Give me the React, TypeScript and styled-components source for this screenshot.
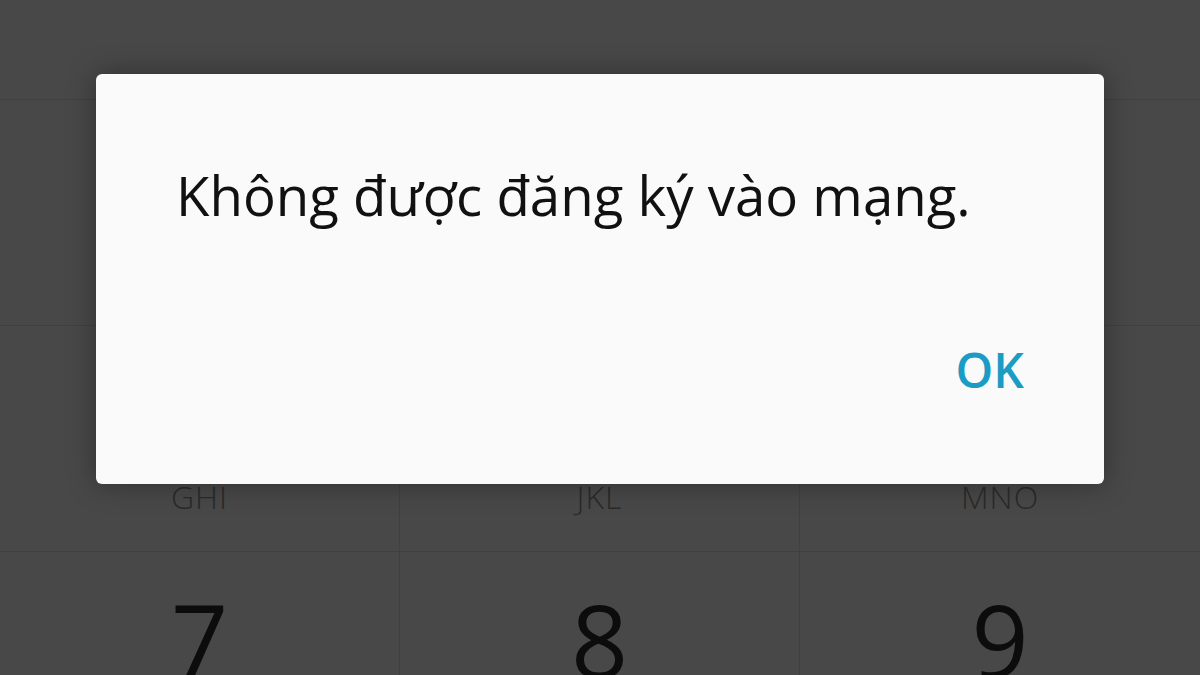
import styled, { createGlobalStyle } from "styled-components";

const GlobalStyle = createGlobalStyle`
  html, body {
    margin: 0;
    padding: 0;
    width: 1200px;
    height: 675px;
    overflow: hidden;
    background: #484848;
    font-family: "Open Sans", "Noto Sans", sans-serif;
  }
`;

export default function App() {
  const keys = [
    { id: 1, digit: "1", letters: "" },
    { id: 2, digit: "2", letters: "ABC" },
    { id: 3, digit: "3", letters: "DEF" },
    { id: 4, digit: "4", letters: "GHI" },
    { id: 5, digit: "5", letters: "JKL" },
    { id: 6, digit: "6", letters: "MNO" },
    { id: 7, digit: "7", letters: "PQRS" },
    { id: 8, digit: "8", letters: "TUV" },
    { id: 9, digit: "9", letters: "WXYZ" },
  ];

  return (
    <>
      <GlobalStyle />
      <Screen>
        <Display />
        <Keypad>
          {keys.map((key) => (
            <Key key={key.id}>
              <Digit>{key.digit}</Digit>
              <Letters>{key.letters}</Letters>
            </Key>
          ))}
        </Keypad>
        <Overlay>
          <Dialog>
            <Message>Không được đăng ký vào mạng.</Message>
            <Actions>
              <OkButton>OK</OkButton>
            </Actions>
          </Dialog>
        </Overlay>
      </Screen>
    </>
  );
}

const Screen = styled.div`
  position: relative;
  width: 1200px;
  height: 675px;
  overflow: hidden;
  background: #484848;
`;

const Display = styled.div`
  height: 99px;
  border-bottom: 1px solid #404040;
`;

const Keypad = styled.div`
  display: grid;
  grid-template-columns: repeat(3, 1fr);
  grid-auto-rows: 226px;
`;

const Key = styled.div`
  display: flex;
  flex-direction: column;
  align-items: center;
  border-bottom: 1px solid #404040;
  border-right: 1px solid #404040;
  &:nth-child(3n) {
    border-right: none;
  }
`;

const Digit = styled.span`
  margin-top: 19px;
  font-size: 100px;
  line-height: 136px;
  color: #0c0c0c;
`;

const Letters = styled.span`
  margin-top: -6px;
  font-size: 32px;
  font-weight: 300;
  line-height: 44px;
  color: #2a2a2a;
  letter-spacing: 1px;
`;

const Overlay = styled.div`
  position: absolute;
  inset: 0;
  padding: 74px 96px 0;
`;

const Dialog = styled.div`
  height: 410px;
  box-sizing: border-box;
  display: flex;
  flex-direction: column;
  padding: 85px 70px 0 80px;
  background: #fafafa;
  border-radius: 6px;
  box-shadow: 0 0 28px rgba(0, 0, 0, 0.35);
`;

const Message = styled.p`
  margin: 0;
  font-size: 54.6px;
  font-weight: 500;
  line-height: 72px;
  color: #111;
  white-space: nowrap;
`;

const Actions = styled.div`
  display: flex;
  justify-content: flex-end;
  margin-top: 107px;
  padding-right: 10px;
`;

const OkButton = styled.span`
  font-size: 48px;
  font-weight: 600;
  line-height: 64px;
  color: #1b9cc4;
`;
